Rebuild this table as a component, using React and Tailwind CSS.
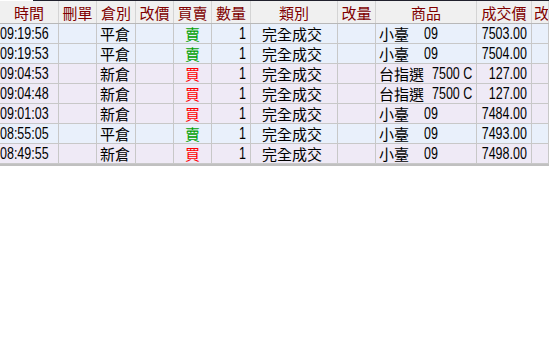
import React from "react";

const cols =
  "grid grid-cols-[59px_38px_39px_38px_38px_39px_87px_38px_101px_55px_17px]";

const rows = [
  { t: "09:19:56", kind: "平倉", side: "賣", name: "小臺", code: "09", gap: "ml-[15px]", price: "7503.00" },
  { t: "09:19:53", kind: "平倉", side: "賣", name: "小臺", code: "09", gap: "ml-[15px]", price: "7504.00" },
  { t: "09:04:53", kind: "新倉", side: "買", name: "台指選", code: "7500 C", gap: "ml-[8px]", price: "127.00" },
  { t: "09:04:48", kind: "新倉", side: "買", name: "台指選", code: "7500 C", gap: "ml-[8px]", price: "127.00" },
  { t: "09:01:03", kind: "新倉", side: "買", name: "小臺", code: "09", gap: "ml-[15px]", price: "7484.00" },
  { t: "08:55:05", kind: "平倉", side: "賣", name: "小臺", code: "09", gap: "ml-[15px]", price: "7493.00" },
  { t: "08:49:55", kind: "新倉", side: "買", name: "小臺", code: "09", gap: "ml-[15px]", price: "7498.00" },
];

const cjk = "font-['Noto_Sans_CJK_TC',sans-serif]";
const num = "inline-block font-['Liberation_Sans',sans-serif] text-[16px] scale-x-[0.78]";
const cell = "border-r border-[#c8c8c8] flex items-center overflow-hidden whitespace-nowrap";

export default function App() {
  return (
    <div className="w-[549px] h-[338px] bg-white overflow-hidden">
      <div className="h-px ml-[33px] bg-[#20202c]"></div>

      <div className={`${cols} h-[23px] bg-[#f0f0f0] border-b border-[#b8b8b8] text-[#800000] text-[15px] leading-none ${cjk}`}>
        {["時間", "刪單", "倉別", "改價", "買賣", "數量", "類別", "改量", "商品", "成交價", "改"].map((h, i) => (
          <div key={i} className={`${cell} border-[#d4d4d4] ${i === 10 ? "justify-start pl-[2px]" : "justify-center"}`}>
            {h}
          </div>
        ))}
      </div>

      {rows.map((r, i) => {
        const bg = r.kind === "平倉" ? "bg-[#e9f0fb]" : "bg-[#efeaf6]";
        return (
          <div key={i} className={`${cols} h-[20px] ${bg} border-b border-[#c8c8c8] text-black text-[15px] leading-none`}>
            <div className={cell}>
              <span className={`${num} origin-left`}>{r.t}</span>
            </div>
            <div className={cell}></div>
            <div className={`${cell} pl-[3px] ${cjk}`}>{r.kind}</div>
            <div className={cell}></div>
            <div className={`${cell} justify-center ${cjk} ${r.side === "賣" ? "text-[#00a000]" : "text-[#ff0000]"}`}>
              {r.side}
            </div>
            <div className={`${cell} justify-end pr-[4px]`}>
              <span className={`${num} origin-right`}>1</span>
            </div>
            <div className={`${cell} pl-[11px] ${cjk}`}>完全成交</div>
            <div className={cell}></div>
            <div className={`${cell} pl-[3px]`}>
              <span className={cjk}>{r.name}</span>
              <span className={`${r.gap} ${num} origin-left`}>{r.code}</span>
            </div>
            <div className={`${cell} justify-end pr-[4px]`}>
              <span className={`${num} origin-right`}>{r.price}</span>
            </div>
            <div className={cell}></div>
          </div>
        );
      })}
      <div className="h-[2px] bg-[#c0c0c0]"></div>
    </div>
  );
}
